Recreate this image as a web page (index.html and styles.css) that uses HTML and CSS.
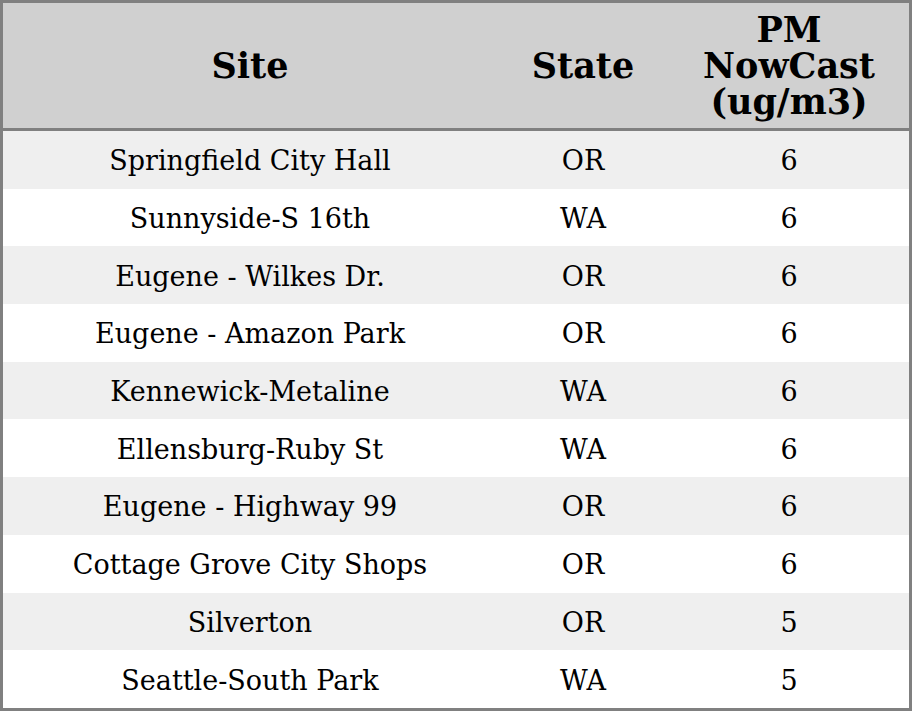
FILE: index.html
```html
<!DOCTYPE html>
<html>
<head>
<meta charset="utf-8">
<link rel="stylesheet" href="styles.css">
</head>
<body>
<table class="aq">
  <thead>
    <tr><th class="c-site">Site</th><th class="c-state">State</th><th class="c-pm">PM NowCast (ug/m3)</th></tr>
  </thead>
  <tbody>
    <tr><td>Springfield City Hall</td><td>OR</td><td>6</td></tr>
    <tr><td>Sunnyside-S 16th</td><td>WA</td><td>6</td></tr>
    <tr><td>Eugene - Wilkes Dr.</td><td>OR</td><td>6</td></tr>
    <tr><td>Eugene - Amazon Park</td><td>OR</td><td>6</td></tr>
    <tr><td>Kennewick-Metaline</td><td>WA</td><td>6</td></tr>
    <tr><td>Ellensburg-Ruby St</td><td>WA</td><td>6</td></tr>
    <tr><td>Eugene - Highway 99</td><td>OR</td><td>6</td></tr>
    <tr><td>Cottage Grove City Shops</td><td>OR</td><td>6</td></tr>
    <tr><td>Silverton</td><td>OR</td><td>5</td></tr>
    <tr><td>Seattle-South Park</td><td>WA</td><td>5</td></tr>
  </tbody>
</table>
</body>
</html>
```
FILE: styles.css
```css
html, body {
  margin: 0;
  padding: 0;
  background: #ffffff;
}
.aq {
  width: 912px;
  height: 711px;
  border-collapse: collapse;
  border: 3px solid #808080;
  font-family: "DejaVu Serif", serif;
  color: #000;
  table-layout: fixed;
}
.aq th {
  background: #d0d0d0;
  font-size: 35px;
  line-height: 36px;
  font-weight: bold;
  text-align: center;
  padding: 9px 0 8px;
  height: 108px;
  border-bottom: 3px solid #808080;
}
.c-site { width: 494px; }
.c-state { width: 172px; }
.c-pm { width: auto; padding-left: 10px !important; padding-right: 10px !important; }
.aq td {
  font-size: 27px;
  text-align: center;
  padding: 2px 0 0;
  height: 55.7px;
}
.aq tbody tr:nth-child(odd) td { background: #efefef; }
.aq tbody tr:nth-child(even) td { background: #ffffff; }
```
